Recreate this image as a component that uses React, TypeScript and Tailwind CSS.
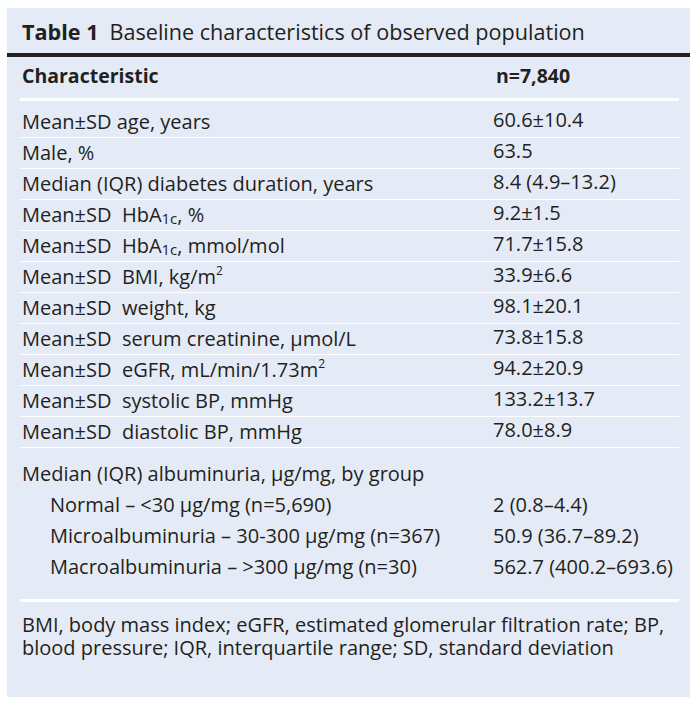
const rows: [React.ReactNode, string][] = [
  ['Mean±SD age, years', '60.6±10.4'],
  ['Male, %', '63.5'],
  ['Median (IQR) diabetes duration, years', '8.4 (4.9–13.2)'],
  [<>Mean±SD&nbsp; HbA<sub className="text-[15px] align-[-4px]">1c</sub>, %</>, '9.2±1.5'],
  [<>Mean±SD&nbsp; HbA<sub className="text-[15px] align-[-4px]">1c</sub>, mmol/mol</>, '71.7±15.8'],
  [<>Mean±SD&nbsp; BMI, kg/m<sup className="text-[12px] align-[8px]">2</sup></>, '33.9±6.6'],
  [<>Mean±SD&nbsp; weight, kg</>, '98.1±20.1'],
  [<>Mean±SD&nbsp; serum creatinine, µmol/L</>, '73.8±15.8'],
  [<>Mean±SD&nbsp; eGFR, mL/min/1.73m<sup className="text-[12px] align-[8px]">2</sup></>, '94.2±20.9'],
  [<>Mean±SD&nbsp; systolic BP, mmHg</>, '133.2±13.7'],
  [<>Mean±SD&nbsp; diastolic BP, mmHg</>, '78.0±8.9'],
]

const groups: [string, string][] = [
  ['Normal – <30 µg/mg (n=5,690)', '2 (0.8–4.4)'],
  ['Microalbuminuria – 30-300 µg/mg (n=367)', '50.9 (36.7–89.2)'],
  ['Macroalbuminuria – >300 µg/mg (n=30)', '562.7 (400.2–693.6)'],
]

export default function App() {
  return (
    <main className="min-h-screen bg-white pt-[8px] pl-[7px] text-[#231f20]" style={{ fontFamily: '"Open Sans", sans-serif' }}>
      <div className="w-[683px] h-[689px] bg-[#e5ebf6] flex flex-col">
        {/* title */}
        <div className="h-[45px] flex items-center pl-[15px] pt-[3px] text-[21.6px] leading-none">
          <span className="font-bold">Table 1</span>
          <span className="ml-[11px]">Baseline characteristics of observed population</span>
        </div>
        <div className="h-[4px] bg-[#231f20]" />

        <div className="ml-[13px] mr-[11px] flex flex-col">
          {/* header */}
          <div className="h-[44px] flex items-center pb-[4px] text-[19.5px] font-bold border-b-[3px] border-white">
            <div className="w-[473px] pl-[2px]">Characteristic</div>
            <div className="pl-[3px]">n=7,840</div>
          </div>

          {/* main rows */}
          <div className="pt-[6px] text-[20px]">
            {rows.map(([label, value], i) => (
              <div key={i} className="h-[31px] flex border-b border-white">
                <div className="w-[473px] pl-[2px] flex items-center pb-[1px] whitespace-nowrap">{label}</div>
                <div className="flex items-center pb-[5px] whitespace-nowrap">{value}</div>
              </div>
            ))}
          </div>

          {/* albuminuria group */}
          <div className="pt-[10px] pb-[17px] text-[20px] border-b-[3px] border-white">
            <div className="h-[31px] flex items-center pl-[2px]">Median (IQR) albuminuria, µg/mg, by group</div>
            {groups.map(([label, value]) => (
              <div key={label} className="h-[31px] flex">
                <div className="w-[473px] pl-[30px] flex items-center whitespace-nowrap">{label}</div>
                <div className="flex items-center whitespace-nowrap">{value}</div>
              </div>
            ))}
          </div>

          {/* footnote */}
          <div className="pt-[11px] pl-[2px] text-[20px]">
            <div className="h-[23px] flex items-center whitespace-nowrap">BMI, body mass index; eGFR, estimated glomerular filtration rate; BP,</div>
            <div className="h-[23px] flex items-center whitespace-nowrap">blood pressure; IQR, interquartile range; SD, standard deviation</div>
          </div>
        </div>
      </div>
    </main>
  )
}
